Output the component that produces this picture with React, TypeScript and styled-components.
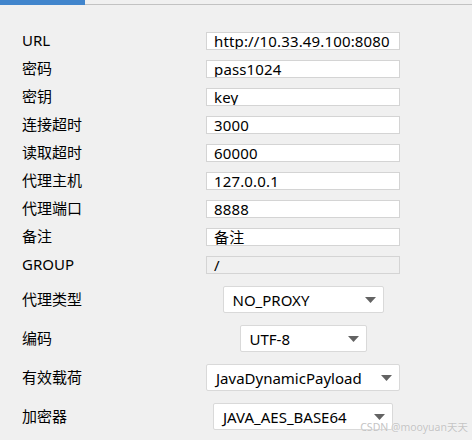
import React from "react";
import styled, { createGlobalStyle } from "styled-components";

const Global = createGlobalStyle`
  html, body { margin: 0; padding: 0; background: #f0f0f0; }
  body { width: 472px; height: 440px; overflow: hidden; }
`;

const Page = styled.div`
  position: relative;
  width: 472px;
  height: 440px;
  background: #f0f0f0;
  font-family: "Noto Sans", "Noto Sans CJK SC", sans-serif;
  font-size: 15px;
  color: #000;
`;

const TabStrip = styled.div`
  display: flex;
  align-items: flex-end;
  height: 6px;
`;

const ActiveTab = styled.div`
  width: 85px;
  height: 5px;
  margin-bottom: 1px;
  background: #4185cc;
`;

const TabLine = styled.div`
  flex: 1;
  height: 1px;
  background: #c2c2c2;
  transform: translateY(-1px);
`;

const Form = styled.div`
  display: flex;
  flex-direction: column;
  padding: 21px 0 0 22px;
`;

const Row = styled.div<{ $h: number }>`
  display: grid;
  grid-template-columns: 184px 194px;
  align-items: center;
  height: ${(p) => p.$h}px;
`;

const Label = styled.div<{ $lift?: number }>`
  line-height: 28px;
  white-space: nowrap;
  transform: translateY(${(p) => -(p.$lift ?? 0)}px);
`;

const Field = styled.div<{ $disabled?: boolean }>`
  box-sizing: border-box;
  height: 18px;
  border: 1px solid #d4d4d4;
  background: ${(p) => (p.$disabled ? "#f0f0f0" : "#ffffff")};
  padding-left: 7px;
  overflow: hidden;
  white-space: nowrap;
  line-height: 16px;
  letter-spacing: 0.15px;
`;

const SelectCell = styled.div`
  display: flex;
  justify-content: center;
`;

const Select = styled.div<{ $w: number }>`
  box-sizing: border-box;
  width: ${(p) => p.$w}px;
  height: 27px;
  display: flex;
  align-items: center;
  justify-content: space-between;
  padding: 0 7px 0 9px;
  background: #ffffff;
  border: 1px solid #d9d9d9;
  border-radius: 2px;
  white-space: nowrap;
`;

const Arrow = styled.svg`
  width: 11px;
  height: 6px;
  flex: none;
`;

const Watermark = styled.div`
  position: absolute;
  right: 4px;
  bottom: 6px;
  font-family: "Noto Sans", "Noto Sans CJK SC", sans-serif;
  font-size: 10.5px;
  color: #c4c4c4;
  text-shadow: 0 0 1px #ffffff;
  white-space: nowrap;
`;

const textRows: [string, string, boolean?][] = [
  ["URL", "http://10.33.49.100:8080"],
  ["密码", "pass1024"],
  ["密钥", "key"],
  ["连接超时", "3000"],
  ["读取超时", "60000"],
  ["代理主机", "127.0.0.1"],
  ["代理端口", "8888"],
  ["备注", "备注"],
  ["GROUP", "/", true],
];

const selectRows: [string, string, number][] = [
  ["代理类型", "NO_PROXY", 161],
  ["编码", "UTF-8", 127],
  ["有效载荷", "JavaDynamicPayload", 210],
  ["加密器", "JAVA_AES_BASE64", 180],
];

export default function App() {
  return (
    <Page>
      <Global />
      <TabStrip>
        <ActiveTab />
        <TabLine />
      </TabStrip>
      <Form>
        {textRows.map(([label, value, disabled]) => (
          <Row $h={28} key={label}>
            <Label $lift={1}>{label}</Label>
            <Field $disabled={disabled}>{value}</Field>
          </Row>
        ))}
        <Row $h={1} />
        {selectRows.map(([label, value, w]) => (
          <Row $h={39} key={label}>
            <Label $lift={1}>{label}</Label>
            <SelectCell>
              <Select $w={w}>
                <span>{value}</span>
                <Arrow viewBox="0 0 11 6">
                  <path d="M0 0 H11 L5.5 6 Z" fill="#636363" />
                </Arrow>
              </Select>
            </SelectCell>
          </Row>
        ))}
      </Form>
      <Watermark>CSDN @mooyuan天天</Watermark>
    </Page>
  );
}
